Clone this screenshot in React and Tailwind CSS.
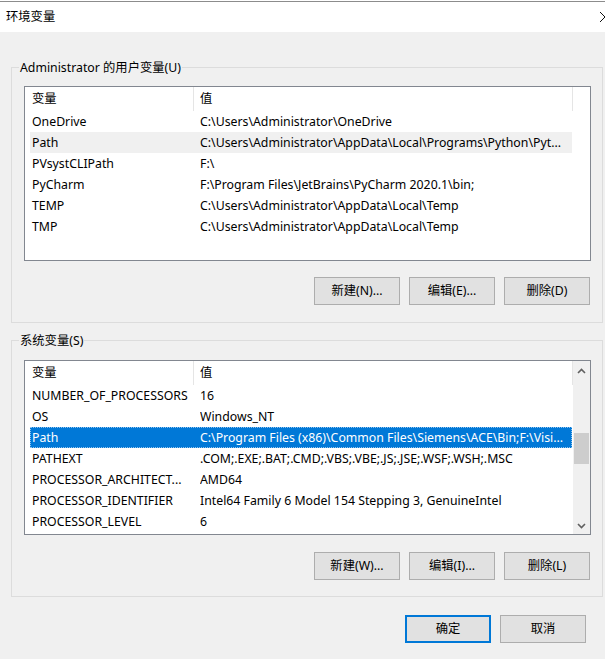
import React from 'react';

const userVars = [
    ['OneDrive', 'C:\\Users\\Administrator\\OneDrive'],
    ['Path', 'C:\\Users\\Administrator\\AppData\\Local\\Programs\\Python\\Pyt...'],
    ['PVsystCLIPath', 'F:\\'],
    ['PyCharm', 'F:\\Program Files\\JetBrains\\PyCharm 2020.1\\bin;'],
    ['TEMP', 'C:\\Users\\Administrator\\AppData\\Local\\Temp'],
    ['TMP', 'C:\\Users\\Administrator\\AppData\\Local\\Temp'],
];

const systemVars = [
    ['NUMBER_OF_PROCESSORS', '16'],
    ['OS', 'Windows_NT'],
    ['Path', 'C:\\Program Files (x86)\\Common Files\\Siemens\\ACE\\Bin;F:\\Visi...'],
    ['PATHEXT', '.COM;.EXE;.BAT;.CMD;.VBS;.VBE;.JS;.JSE;.WSF;.WSH;.MSC'],
    ['PROCESSOR_ARCHITECT...', 'AMD64'],
    ['PROCESSOR_IDENTIFIER', 'Intel64 Family 6 Model 154 Stepping 3, GenuineIntel'],
    ['PROCESSOR_LEVEL', '6'],
];

const Chevron = ({ down }) => (
    <svg width="9" height="6" viewBox="0 0 9 6">
        <polyline
            points={down ? '1,1 4.5,4.5 8,1' : '1,5 4.5,1.5 8,5'}
            fill="none"
            stroke="#606060"
            strokeWidth="1.6"
        />
    </svg>
);

const Button = ({ children, primary }) => (
    <button
        className={
            primary
                ? 'w-[86px] h-[28px] bg-[#e1e1e1] border-2 border-[#0078d7] text-black'
                : 'w-[86px] h-[28px] bg-[#e1e1e1] border border-[#adadad] text-black'
        }
    >
        {children}
    </button>
);

// list rows: plain, hovered (light grey) or selected (blue with focus dots)
const Row = ({ name, value, state }) => {
    let cls = 'flex items-center h-[21px] pt-[2px] w-[542px] ml-[5px] text-black';
    if (state === 'hover') cls = 'flex items-center h-[21px] pt-[2px] w-[542px] ml-[5px] bg-[#f0f0f0] text-black';
    if (state === 'selected')
        cls = 'flex items-center h-[21px] pt-[2px] w-[542px] ml-[5px] bg-[#0078d7] text-white outline-1 outline-dotted outline-[#8fc3ef] -outline-offset-1';
    return (
        <div className={cls}>
            <div className="w-[170px] pl-[2px] whitespace-nowrap overflow-hidden">{name}</div>
            <div className="flex-1 min-w-0 whitespace-nowrap overflow-hidden">{value}</div>
        </div>
    );
};

const VarList = ({ rows, activeRow, activeState, scroll }) => (
    <div className="flex h-[175px] w-full bg-white border border-[#828790]">
        <div className="flex-1 min-w-0 flex flex-col">
            <div className="flex h-[24px] shrink-0">
                <div className="w-[169px] pl-[7px] flex items-center border-r border-[#e5e5e5]">变量</div>
                <div className="w-[379px] pl-[6px] flex items-center border-r border-[#e5e5e5]">值</div>
            </div>
            {rows.map(([name, value], i) => (
                <Row key={name} name={name} value={value} state={i === activeRow ? activeState : null} />
            ))}
        </div>
        {scroll ? (
            <div className="w-[17px] bg-[#f0f0f0] flex flex-col">
                <div className="h-[17px] flex items-center justify-center pt-[3px]">
                    <Chevron />
                </div>
                <div className="h-[55px]" />
                <div className="h-[31px] mx-[1px] bg-[#cdcdcd]" />
                <div className="flex-1" />
                <div className="h-[17px] flex items-center justify-center">
                    <Chevron down />
                </div>
            </div>
        ) : (
            <div className="w-[17px]" />
        )}
    </div>
);

const Group = ({ label, className, children }) => (
    <fieldset className={`ml-[11px] w-[592px] border border-[#dcdcdc] pl-[12px] pr-[11px] ${className}`}>
        <legend className="-ml-[5px] px-[1px] leading-[15px]">{label}</legend>
        {children}
    </fieldset>
);

export default function App() {
    return (
        <div className="w-[605px] h-[659px] overflow-hidden bg-[#f0f0f0] flex flex-col text-[12.3px] text-black font-['Noto_Sans','Noto_Sans_CJK_SC',sans-serif]">
            <div className="h-px bg-white shrink-0" />
            <div className="h-[31px] shrink-0 bg-white border-t border-[#8c8c8c] flex items-center justify-between pl-[6px]">
                <span>环境变量</span>
                <svg width="12" height="12" viewBox="0 0 12 12" className="mr-[-6px]">
                    <path d="M1 1 L11 11 M11 1 L1 11" stroke="#111" strokeWidth="1" fill="none" />
                </svg>
            </div>

            <div className="pt-[28px] flex flex-col">
                <Group label="Administrator 的用户变量(U)" className="pt-[11px] pb-[17px]">
                    <VarList rows={userVars} activeRow={1} activeState="hover" />
                    <div className="mt-[16px] pr-[1px] flex justify-end gap-[9px]">
                        <Button>新建(N)...</Button>
                        <Button>编辑(E)...</Button>
                        <Button>删除(D)</Button>
                    </div>
                </Group>

                <Group label="系统变量(S)" className="mt-[10px] pt-[12px] pb-[16px]">
                    <VarList rows={systemVars} activeRow={2} activeState="selected" scroll />
                    <div className="mt-[17px] pr-[1px] flex justify-end gap-[9px]">
                        <Button>新建(W)...</Button>
                        <Button>编辑(I)...</Button>
                        <Button>删除(L)</Button>
                    </div>
                </Group>

                <div className="mt-[18px] pr-[19px] flex justify-end gap-[9px]">
                    <Button primary>确定</Button>
                    <Button>取消</Button>
                </div>
            </div>
        </div>
    );
}
